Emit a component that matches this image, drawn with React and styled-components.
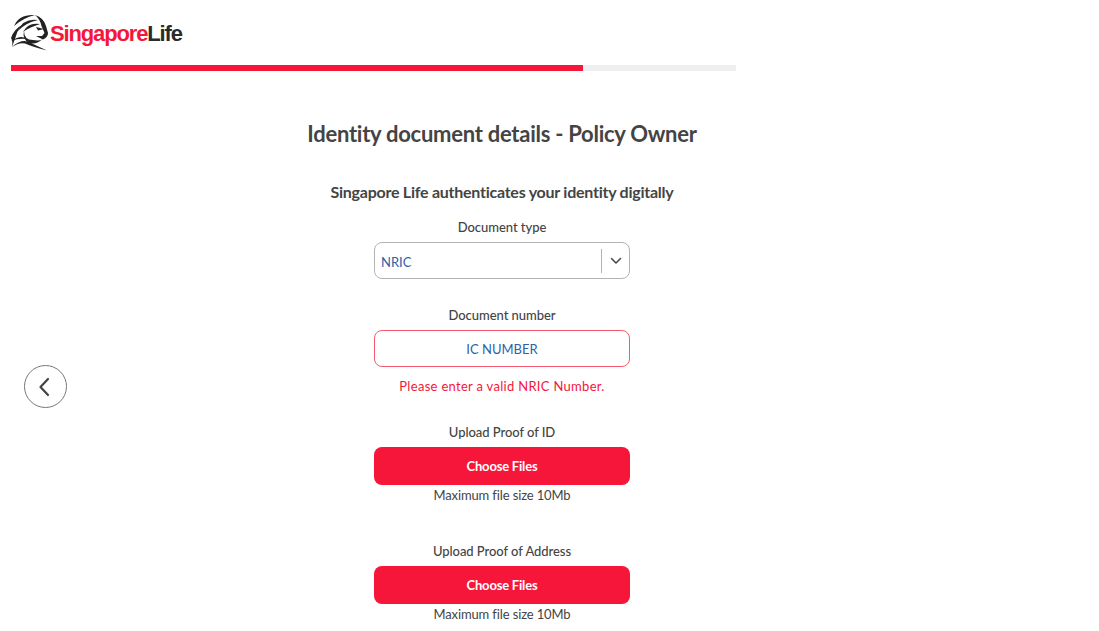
import React from "react";
import styled, { createGlobalStyle } from "styled-components";

const Global = createGlobalStyle`
  html, body { margin: 0; padding: 0; background: #fff; overflow: hidden; }
  body { font-family: Lato, "Open Sans", sans-serif; color: #444; }
`;
const Page = styled.div`
  width: 1099px;
  height: 631px;
  overflow: hidden;
  display: flex;
  flex-direction: column;
`;
const Header = styled.header`
  height: 65px;
  padding-left: 11px;
  display: flex;
  align-items: flex-start;
  padding-top: 14px;
  box-sizing: border-box;
`;
const Logo = styled.div`
  display: flex;
  align-items: center;
  gap: 2px;
`;
const Brand = styled.span`
  font-family: "Liberation Sans", Arial, sans-serif;
  font-weight: 700;
  font-size: 22px;
  letter-spacing: -1.15px;
  color: #f5163a;
  margin-top: 3px;
`;
const BrandDark = styled.span`
  color: #2b2b2b;
`;
const Track = styled.div`
  width: 725px;
  height: 6px;
  margin-left: 11px;
  background: #efefef;
`;
const Fill = styled.div`
  height: 100%;
  background: #f5163a;
`;
const Main = styled.main`
  flex: 1;
  display: grid;
  grid-template-columns: 89px 826px;
`;
const BackColumn = styled.div`
  padding: 294px 0 0 24px;
`;
const BackButton = styled.button`
  width: 43px;
  height: 43px;
  padding: 0;
  border: 1px solid #777;
  border-radius: 50%;
  background: #fff;
  display: flex;
  align-items: center;
  justify-content: center;
`;
const Form = styled.div`
  display: flex;
  flex-direction: column;
  align-items: center;
`;
const Title = styled.h1`
  margin: 49px 0 0;
  font-size: 22px;
  line-height: 28px;
  font-weight: 700;
  color: #444;
  letter-spacing: -0.26px;
`;
const Subtitle = styled.h2`
  margin: 34px 0 0;
  font-size: 16px;
  line-height: 20px;
  font-weight: 700;
  color: #444;
  letter-spacing: -0.25px;
`;
const Field = styled.div`
  width: 256px;
  display: flex;
  flex-direction: column;
  align-items: center;
  margin-top: ${p => p.$top}px;
`;
const Label = styled.label`
  font-size: 13px;
  line-height: 16px;
  font-weight: 500;
  color: #444;
  letter-spacing: -0.05px;
  margin-bottom: 7px;
`;
const Select = styled.div`
  width: 100%;
  height: 37px;
  box-sizing: border-box;
  border: 1px solid #b3b3b3;
  border-radius: 8px;
  display: flex;
  align-items: center;
  padding-left: 6px;
`;
const SelectValue = styled.span`
  flex: 1;
  font-size: 13px;
  line-height: 16px;
  padding-top: 3px;
  color: #2d62a8;
`;
const Caret = styled.span`
  width: 27px;
  height: 24px;
  border-left: 1px solid #b3b3b3;
  display: flex;
  align-items: center;
  justify-content: center;
`;
const Input = styled.div`
  width: 100%;
  height: 37px;
  box-sizing: border-box;
  border: 1px solid #f65a72;
  border-radius: 8px;
  display: flex;
  align-items: center;
  justify-content: center;
  font-size: 13px;
  color: #2d62a8;
`;
const ErrorText = styled.div`
  margin-top: 11px;
  font-size: 13px;
  line-height: 16px;
  color: #f5163a;
  letter-spacing: 0.3px;
  white-space: nowrap;
`;
const UploadButton = styled.button`
  width: 100%;
  height: 38px;
  border: 0;
  border-radius: 8px;
  background: #f5163a;
  color: #fff;
  font-family: inherit;
  font-size: 13px;
  font-weight: 700;
  letter-spacing: -0.2px;
`;
const Hint = styled.div`
  margin-top: 2px;
  font-size: 13px;
  line-height: 16px;
  color: #444;
  letter-spacing: -0.13px;
`;

const LionMark = () => (
  <svg width="37" height="37" viewBox="0 0 37 37" fill="#222" stroke="none">
    <path d="M3 12Q8 0 24 1Q12 4 3 12Z" />
    <path d="M7 17Q12 4 27 6Q14 9 7 17Z" />
    <path d="M12 18Q17 8 29 10Q19 13 12 18Z" />
    <path d="M24 1Q33 4 35 12L37 19Q37 23 32 25.500L25 22L31 22L33.500 19L30.500 12Q29 5 24 1Z" />
    <path d="M25 13L33 15L27 16.500Z" />
    <path d="M0 24Q3 15 11 11Q6 17 5 22L1 33Q2 27 0 24Z" />
    <path d="M13 17Q13 26 22 26Q28 27 31 25.500Q25 31 18 29Q11 25 13 17Z" />
    <path d="M0 27Q11 20 15 25Q8 24 0 27Z" />
    <path d="M1 33Q12 23 22 30L36 36.500Q22 33 14 29.500Q8 28 1 33Z" />
  </svg>
);

const Chevron = () => (
  <svg width="12" height="8" viewBox="0 0 12 8" fill="none" stroke="#444" strokeWidth="1.5" strokeLinecap="round" strokeLinejoin="round">
    <path d="M1.500 1.500L6 6L10.500 1.500" />
  </svg>
);

const BackIcon = () => (
  <svg width="12" height="20" viewBox="0 0 12 20" fill="none" stroke="#444" strokeWidth="2.2" strokeLinecap="round" strokeLinejoin="round" style={{ marginLeft: -3 }}>
    <path d="M10 2L2.500 10L10 18" />
  </svg>
);

export default function App() {
  return (
    <Page>
      <Global />
      <Header>
        <Logo>
          <LionMark />
          <Brand>Singapore<BrandDark>Life</BrandDark></Brand>
        </Logo>
      </Header>
      <Track><Fill style={{ width: "78.9%" }} /></Track>
      <Main>
        <BackColumn>
          <BackButton aria-label="Back"><BackIcon /></BackButton>
        </BackColumn>
        <Form>
          <Title>Identity document details - Policy Owner</Title>
          <Subtitle>Singapore Life authenticates your identity digitally</Subtitle>
          <Field $top={17}>
            <Label>Document type</Label>
            <Select>
              <SelectValue>NRIC</SelectValue>
              <Caret><Chevron /></Caret>
            </Select>
          </Field>
          <Field $top={28}>
            <Label>Document number</Label>
            <Input>IC NUMBER</Input>
            <ErrorText>Please enter a valid NRIC Number.</ErrorText>
          </Field>
          <Field $top={30}>
            <Label>Upload Proof of ID</Label>
            <UploadButton>Choose Files</UploadButton>
            <Hint>Maximum file size 10Mb</Hint>
          </Field>
          <Field $top={40}>
            <Label>Upload Proof of Address</Label>
            <UploadButton>Choose Files</UploadButton>
            <Hint>Maximum file size 10Mb</Hint>
          </Field>
        </Form>
      </Main>
    </Page>
  );
}
